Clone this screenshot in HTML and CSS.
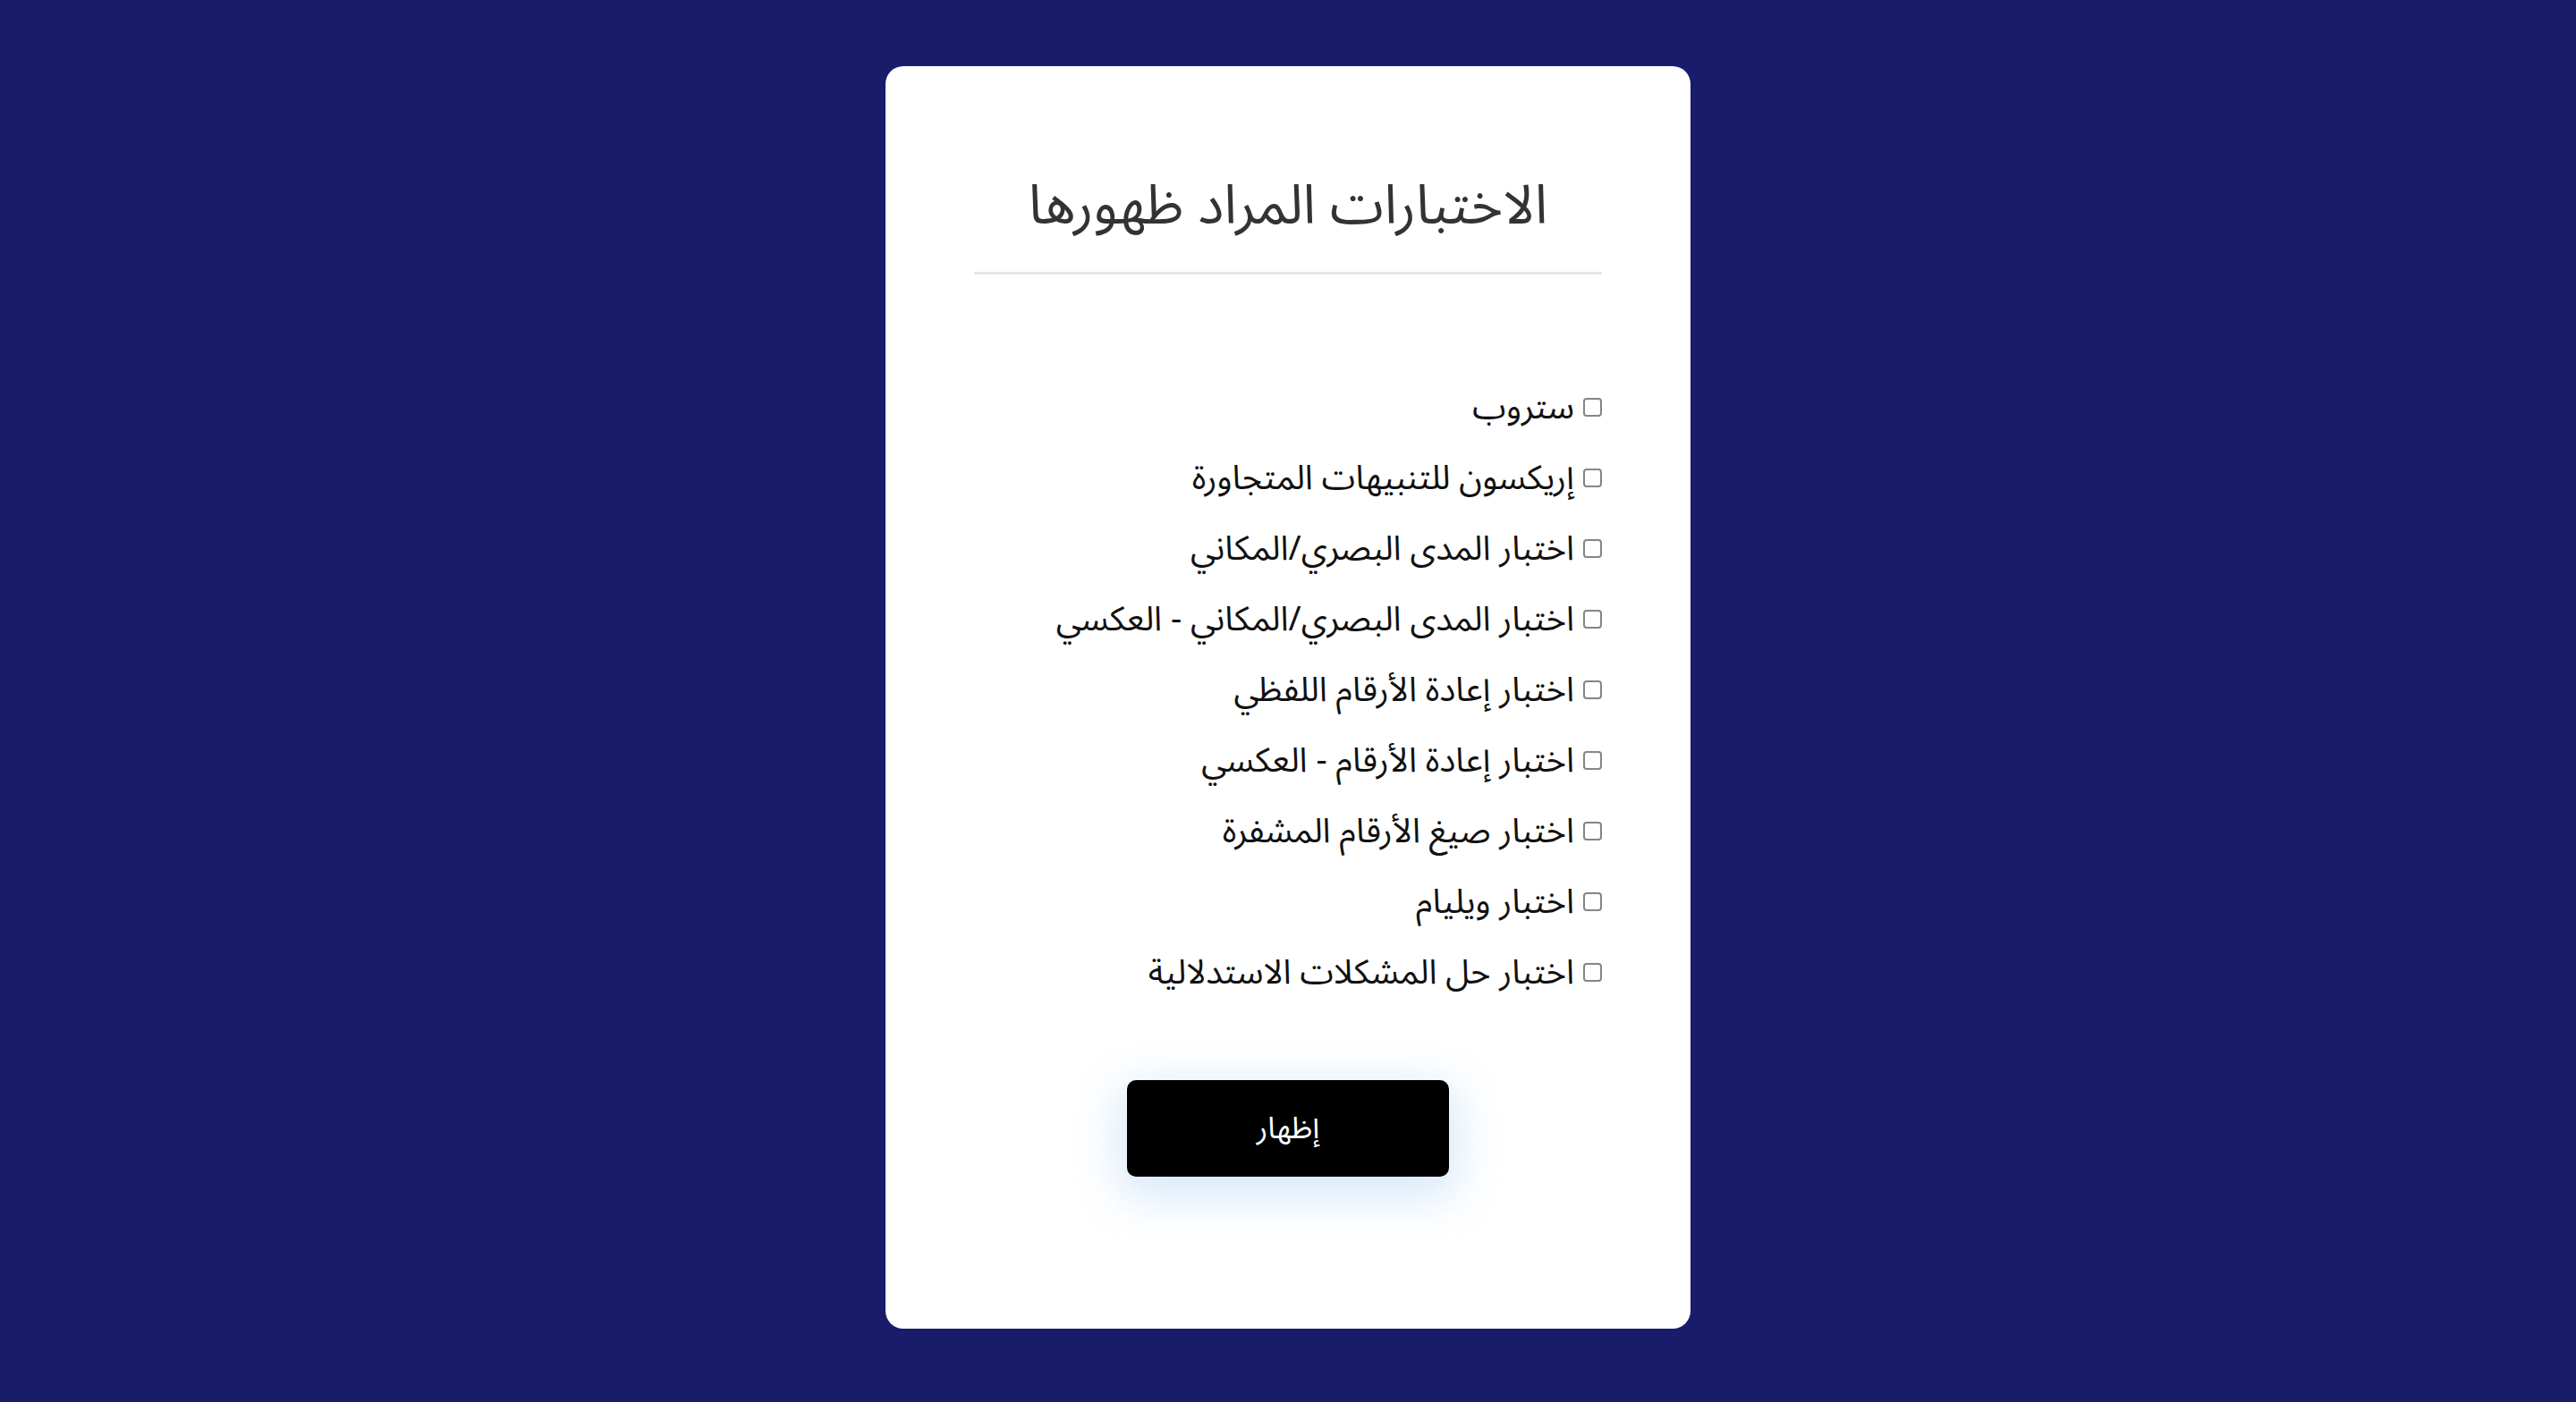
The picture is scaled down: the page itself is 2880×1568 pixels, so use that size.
FILE: index.html
```html
<!DOCTYPE html>
<html lang="ar" dir="rtl">
<head>
<meta charset="utf-8">
<title>الاختبارات المراد ظهورها</title>
<link rel="stylesheet" href="styles.css">
</head>
<body>
<main class="card">
  <h1 class="title">الاختبارات المراد ظهورها</h1>
  <ul class="options">
    <li class="option"><label><input type="checkbox"> ستروب</label></li>
    <li class="option"><label><input type="checkbox"> إريكسون للتنبيهات المتجاورة</label></li>
    <li class="option"><label><input type="checkbox"> اختبار المدى البصري/المكاني</label></li>
    <li class="option"><label><input type="checkbox"> اختبار المدى البصري/المكاني - العكسي</label></li>
    <li class="option"><label><input type="checkbox"> اختبار إعادة الأرقام اللفظي</label></li>
    <li class="option"><label><input type="checkbox"> اختبار إعادة الأرقام - العكسي</label></li>
    <li class="option"><label><input type="checkbox"> اختبار صيغ الأرقام المشفرة</label></li>
    <li class="option"><label><input type="checkbox"> اختبار ويليام</label></li>
    <li class="option"><label><input type="checkbox"> اختبار حل المشكلات الاستدلالية</label></li>
  </ul>
  <div class="actions">
    <button class="show-btn" type="button">إظهار</button>
  </div>
</main>
</body>
</html>
```

FILE: styles.css
```css
html, body {
  margin: 0;
  padding: 0;
}
body {
  background: #191c6b;
  font-family: "Noto Sans Arabic", "DejaVu Sans", "Noto Sans", sans-serif;
  padding: 74px 0 80px;
}
.card {
  width: 900px;
  box-sizing: border-box;
  margin: 0 auto;
  background: #ffffff;
  border-radius: 20px;
  padding: 102px 99px 170px;
}
.title {
  margin: 0;
  padding: 0 0 18px;
  text-align: center;
  font-weight: 400;
  font-size: 61px;
  line-height: 110px;
  color: #333333;
  border-bottom: 3px solid #e6e6e6;
}
.options {
  list-style: none;
  margin: 109px 0 0;
  padding: 0;
  display: flex;
  flex-direction: column;
}
.option {
  height: 79px;
  display: flex;
  align-items: center;
  font-size: 38px;
  color: #111111;
}
.option label {
  display: flex;
  align-items: center;
  gap: 10px;
}
.option input {
  appearance: none;
  -webkit-appearance: none;
  width: 21px;
  height: 21px;
  margin: 0;
  border: 2px solid #858585;
  border-radius: 4px;
  background: #ffffff;
  box-sizing: border-box;
}
.actions {
  display: flex;
  justify-content: center;
  margin-top: 81px;
}
.show-btn {
  width: 360px;
  height: 108px;
  border: none;
  border-radius: 10px;
  background: #000000;
  color: #ffffff;
  font-family: inherit;
  font-size: 34px;
  box-shadow: 0 14px 50px 8px rgba(130, 185, 235, 0.32);
}
```
